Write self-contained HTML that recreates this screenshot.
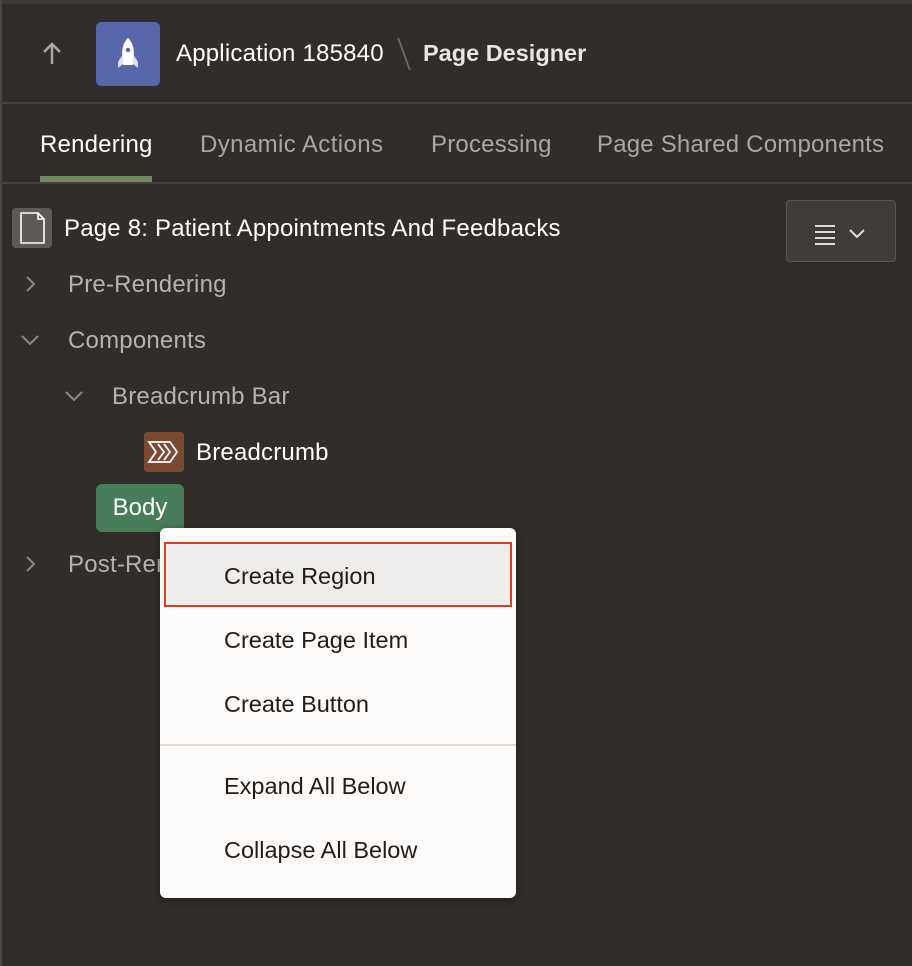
<!DOCTYPE html>
<html><head><style>
body{margin:0;width:912px;height:966px;background:#312d2a;font-family:"Liberation Sans",sans-serif;position:relative;overflow:hidden}
.a{position:absolute;white-space:nowrap}
.t{font-size:24px;letter-spacing:0.2px}
</style></head><body>
<div class="a" style="left:0;top:0;width:912px;height:4px;background:#3d3936"></div>
<div class="a" style="left:0;top:0;width:2px;height:966px;background:#4a4643"></div>
<svg class="a" style="left:40px;top:40px" width="24" height="28"><path d="M12 4 V24 M4 12 L12 4 L20 12" fill="none" stroke="#a9a6a3" stroke-width="2.5"/></svg>
<div class="a" style="left:96px;top:22px;width:64px;height:64px;background:#5866ab;border-radius:5px">
<svg width="64" height="64"><path d="M32 16 C38 22 39 30 37 43 L27 43 C25 30 26 22 32 16Z" fill="#fff"/><path d="M27 32 L22 40 L22 46 L27 42Z M37 32 L42 40 L42 46 L37 42Z" fill="#dcdff0"/><circle cx="32" cy="28" r="2.2" fill="#5866ab"/></svg></div>
<div class="a" style="left:176px;top:40px;color:#fff;font-size:24px;letter-spacing:0.2px">Application 185840</div>
<div class="a" style="left:403px;top:38px;width:2px;height:32px;background:#6d6966;transform:skewX(20deg)"></div>
<div class="a" style="left:423px;top:40px;color:#e8e6e4;font-size:23.5px;font-weight:bold">Page Designer</div>
<div class="a" style="left:0;top:102px;width:912px;height:2px;background:#45413e"></div>
<div class="a t" style="left:40px;top:131px;color:#fff">Rendering</div>
<div class="a t" style="left:200px;top:131px;color:#a9a6a3;letter-spacing:0.4px">Dynamic Actions</div>
<div class="a t" style="left:431px;top:131px;color:#a9a6a3">Processing</div>
<div class="a t" style="left:597px;top:131px;color:#a9a6a3">Page Shared Components</div>
<div class="a" style="left:40px;top:176px;width:112px;height:6px;background:#6d8b5f"></div>
<div class="a" style="left:0;top:182px;width:912px;height:2px;background:#45413e"></div>
<div class="a" style="left:12px;top:208px;width:40px;height:40px;background:#5e5a57;border-radius:4px">
<svg width="40" height="40"><path d="M9 5 H26 L32 11 V35 H9Z M26 5 V11 H32" fill="none" stroke="#fff" stroke-width="1.6"/></svg></div>
<div class="a t" style="left:64px;top:215px;color:#fff">Page 8: Patient Appointments And Feedbacks</div>
<div class="a" style="left:786px;top:200px;width:110px;height:62px;background:#403c38;border:1.5px solid #5a5653;border-radius:4px;box-sizing:border-box">
<svg width="110" height="62"><path d="M28 25H48M28 31H48M28 37H48M28 43H48" stroke="#ddd" stroke-width="2"/><path d="M63 29 L70 36 L77 29" fill="none" stroke="#ddd" stroke-width="2"/></svg></div>
<svg class="a" style="left:20px;top:274px" width="20" height="20"><path d="M7 3 L14 10 L7 17" fill="none" stroke="#8a8683" stroke-width="2"/></svg>
<div class="a t" style="left:68px;top:271px;color:#b5b2af">Pre-Rendering</div>
<svg class="a" style="left:20px;top:330px" width="22" height="20"><path d="M2 6 L10 14 L18 6" fill="none" stroke="#8a8683" stroke-width="2"/></svg>
<div class="a t" style="left:68px;top:327px;color:#b5b2af">Components</div>
<svg class="a" style="left:64px;top:386px" width="22" height="20"><path d="M2 6 L10 14 L18 6" fill="none" stroke="#8a8683" stroke-width="2"/></svg>
<div class="a t" style="left:112px;top:383px;color:#b5b2af">Breadcrumb Bar</div>
<div class="a" style="left:144px;top:432px;width:40px;height:40px;background:#7b4a32;border-radius:3px">
<svg width="40" height="40"><path d="M5 10 H26 L33 20 L26 30 H5 L12 20Z" fill="none" stroke="#fff" stroke-width="1.8"/><path d="M14 12 L20 20 L14 28 M20 12 L26 20 L20 28" fill="none" stroke="#fff" stroke-width="1.8"/></svg></div>
<div class="a t" style="left:196px;top:439px;color:#fff">Breadcrumb</div>
<div class="a" style="left:96px;top:484px;width:88px;height:48px;background:#487d59;border-radius:6px;color:#fff;font-size:24px;text-align:center;line-height:48px">Body</div>
<svg class="a" style="left:20px;top:554px" width="20" height="20"><path d="M7 3 L14 10 L7 17" fill="none" stroke="#8a8683" stroke-width="2"/></svg>
<div class="a t" style="left:68px;top:551px;color:#b5b2af">Post-Rendering</div>
<div class="a" style="left:160px;top:528px;width:356px;height:370px;background:#fcfbfa;border-radius:6px;box-shadow:0 2px 8px rgba(0,0,0,.4)">
<div class="a" style="left:4px;top:14px;width:348px;height:65px;box-sizing:border-box;background:#efedeb;border:2px solid #d73f27"></div>
<div class="a" style="left:64px;top:35px;color:#201c19;font-size:23.5px">Create Region</div>
<div class="a" style="left:64px;top:99px;color:#201c19;font-size:23.5px">Create Page Item</div>
<div class="a" style="left:64px;top:163px;color:#201c19;font-size:23.5px">Create Button</div>
<div class="a" style="left:0;top:216px;width:356px;height:1.5px;background:#dcd9d6"></div>
<div class="a" style="left:64px;top:245px;color:#201c19;font-size:23.5px">Expand All Below</div>
<div class="a" style="left:64px;top:309px;color:#201c19;font-size:23.5px">Collapse All Below</div>
</div>
</body></html>
